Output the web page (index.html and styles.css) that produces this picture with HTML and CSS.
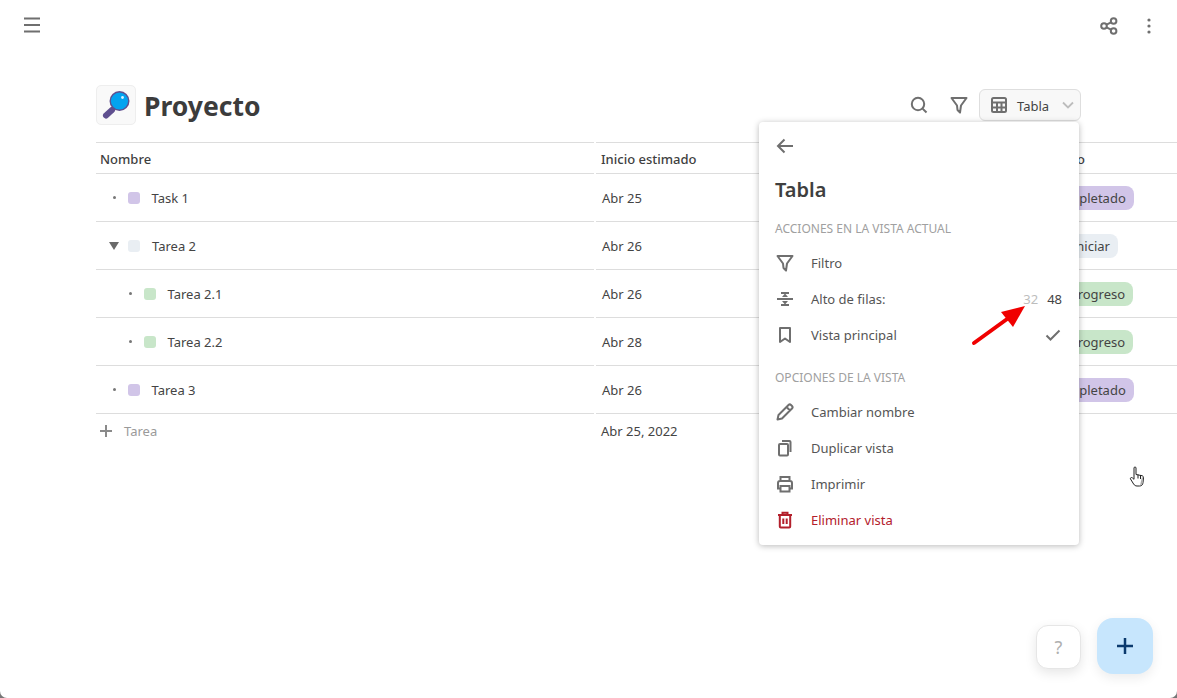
FILE: index.html
```html
<!DOCTYPE html>
<html lang="es">
<head>
<meta charset="utf-8">
<title>Proyecto</title>
<link rel="stylesheet" href="styles.css">
</head>
<body>
<div class="page">
  <header class="topbar">
    <svg class="ico hamburger" viewBox="0 0 16 16" width="16" height="16"><path d="M0 1.500h16M0 8h16M0 14.500h16"/></svg>
    <div class="topbar-right">
      <svg class="ico" viewBox="0 0 18 18" width="18" height="18"><circle cx="4" cy="9" r="2.800"/><circle cx="13.600" cy="4" r="2.800"/><circle cx="13.600" cy="14" r="2.800"/><path d="M6.500 7.700l4.600-2.400M6.500 10.300l4.600 2.400"/></svg>
      <svg class="dots" viewBox="0 0 4 16" width="4" height="16"><circle cx="2" cy="2" r="1.600"/><circle cx="2" cy="8" r="1.600"/><circle cx="2" cy="14" r="1.600"/></svg>
    </div>
  </header>
  <main class="content">
    <div class="titlebar">
      <div class="emoji">
        <svg viewBox="0 0 30 30" width="30" height="30"><path d="M5 25.500l6-5.500" stroke="#5f4f8f" stroke-width="6" stroke-linecap="round" fill="none"/><circle cx="18.500" cy="11" r="10" fill="#5f4f8f"/><circle cx="18.500" cy="11" r="8.600" fill="#03a3f0"/><circle cx="21.500" cy="7.500" r="1.400" fill="#d8f1ff"/></svg>
      </div>
      <h1 class="title">Proyecto</h1>
      <div class="tools">
        <svg class="ico" viewBox="0 0 18 18" width="18" height="18"><circle cx="8" cy="8" r="6.200"/><path d="M12.600 12.600L16.500 16.500"/></svg>
        <svg class="ico tool-filter" viewBox="0 0 18 18" width="18" height="18"><path d="M1.500 2h15L11 9.500l-1 7-2.500-2.500-.5-4.500z" stroke-linejoin="round"/></svg>
        <div class="viewbtn">
          <svg class="ico" viewBox="0 0 16 16" width="16" height="16"><rect x="1" y="1" width="14" height="14" rx="1.500"/><path d="M1 5.500h14M1 10.500h14M6 5.500V15M10.500 5.500V15"/></svg>
          <span class="viewbtn-label">Tabla</span>
          <svg class="chev" viewBox="0 0 12 8" width="12" height="8"><path d="M1 1.500l5 5 5-5"/></svg>
        </div>
      </div>
    </div>
    <div class="table">
      <div class="row head">
        <div class="cell name">Nombre</div><div class="cell">Inicio estimado</div><div class="cell">Estado</div>
      </div>
      <div class="row">
        <div class="cell name l0"><i class="bullet"></i><i class="sw purple"></i><span>Task 1</span></div>
        <div class="cell date">Abr 25</div>
        <div class="cell"><span class="pill purple">Completado</span></div>
      </div>
      <div class="row">
        <div class="cell name l0"><i class="tri"></i><i class="sw grey"></i><span>Tarea 2</span></div>
        <div class="cell date">Abr 26</div>
        <div class="cell"><span class="pill grey">Sin iniciar</span></div>
      </div>
      <div class="row">
        <div class="cell name l1"><i class="bullet"></i><i class="sw green"></i><span>Tarea 2.1</span></div>
        <div class="cell date">Abr 26</div>
        <div class="cell"><span class="pill green">En progreso</span></div>
      </div>
      <div class="row">
        <div class="cell name l1"><i class="bullet"></i><i class="sw green"></i><span>Tarea 2.2</span></div>
        <div class="cell date">Abr 28</div>
        <div class="cell"><span class="pill green">En progreso</span></div>
      </div>
      <div class="row">
        <div class="cell name l0"><i class="bullet"></i><i class="sw purple"></i><span>Tarea 3</span></div>
        <div class="cell date">Abr 26</div>
        <div class="cell"><span class="pill purple">Completado</span></div>
      </div>
      <div class="row add">
        <div class="cell name"><svg class="plus" viewBox="0 0 12 12" width="12" height="12"><path d="M6 0v12M0 6h12"/></svg><span class="add-label">Tarea</span></div>
        <div class="cell">Abr 25, 2022</div>
        <div class="cell"></div>
      </div>
    </div>
  </main>

  <aside class="menu">
    <svg class="ico back" viewBox="0 0 18 16" width="18" height="16"><path d="M17 8H2M8.500 1.500L2 8l6.500 6.500"/></svg>
    <h2 class="menu-title">Tabla</h2>
    <div class="menu-section">ACCIONES EN LA VISTA ACTUAL</div>
    <div class="menu-item">
      <svg class="ico" viewBox="0 0 18 18" width="18" height="18"><path d="M1.500 2h15L11 9.500l-1 7-2.500-2.500-.5-4.500z" stroke-linejoin="round"/></svg>
      <span>Filtro</span>
    </div>
    <div class="menu-item">
      <svg class="ico" viewBox="0 0 18 18" width="18" height="18"><path d="M1 9h16M5 3h8M5 15h8"/><path class="solid" d="M9 3.500l3 3.500H6zM9 14.500l3-3.500H6z"/></svg>
      <span>Alto de filas:</span>
      <span class="heights"><span class="h-off">32</span><span class="h-on">48</span></span>
    </div>
    <div class="menu-item">
      <svg class="ico" viewBox="0 0 18 18" width="18" height="18"><path d="M4 2h10v14l-5-3.500L4 16z" stroke-linejoin="round"/></svg>
      <span>Vista principal</span>
      <svg class="ico check" viewBox="0 0 16 12" width="16" height="12"><path d="M1.500 6.500l4 4 9-9"/></svg>
    </div>
    <div class="menu-section second">OPCIONES DE LA VISTA</div>
    <div class="menu-item">
      <svg class="ico" viewBox="0 0 18 18" width="18" height="18"><path d="M1.500 16.500l1-4.500L12.500 2a1.800 1.800 0 0 1 2.500 0l1 1a1.800 1.800 0 0 1 0 2.500L6 15.500zM10.500 4l3.500 3.500" stroke-linejoin="round"/></svg>
      <span>Cambiar nombre</span>
    </div>
    <div class="menu-item">
      <svg class="ico" viewBox="0 0 18 18" width="18" height="18"><rect x="3" y="5" width="9" height="11.500" rx="1"/><path d="M6 2h7.500a1 1 0 0 1 1 1v10"/></svg>
      <span>Duplicar vista</span>
    </div>
    <div class="menu-item">
      <svg class="ico" viewBox="0 0 18 18" width="18" height="18"><path d="M4.500 6V2h9v4M4.500 13.500H2V8a2 2 0 0 1 2-2h10a2 2 0 0 1 2 2v5.500h-2.500"/><rect x="4.500" y="11" width="9" height="5.500"/></svg>
      <span>Imprimir</span>
    </div>
    <div class="menu-item danger">
      <svg class="ico" viewBox="0 0 18 18" width="18" height="18"><path d="M2 4h14M6.500 4V1.800h5V4M3.800 4v11.500a1 1 0 0 0 1 1h8.400a1 1 0 0 0 1-1V4M7.300 7.500v5.500M10.700 7.500v5.500"/></svg>
      <span>Eliminar vista</span>
    </div>
  </aside>

  <svg class="arrow" viewBox="0 0 70 50" width="70" height="50"><path d="M4 45L44 16" stroke="#f00000" stroke-width="4" stroke-linecap="round" fill="none"/><path d="M55 8L31 14l12 15z" fill="#f00000"/></svg>

  <svg class="cursor" viewBox="0 0 16 22" width="16" height="22"><path d="M5 2a1 1 0 0 1 2 0v6.500l6 1.200c1 .2 1.500 1 1.500 2l-.5 5c-.2 2-1.500 3.300-3.500 3.300H8c-1.500 0-2.500-.7-3.400-2L1.500 13c-.5-1 .7-2 1.800-1.200L5 13.300z" fill="#fff" stroke="#222" stroke-width="1"/><path d="M9 8.500v4M11.500 9v4" stroke="#222" stroke-width="1"/><path d="M13 11l1 .5-.5 6-2.500 2z" fill="#aaa"/></svg>

  <div class="help">?</div>
  <div class="fab"><svg viewBox="0 0 18 18" width="18" height="18"><path d="M9 1v16M1 9h16"/></svg></div>
</div>
</body>
</html>
```
FILE: styles.css
```css
* { box-sizing: border-box; }
html, body { margin: 0; padding: 0; height: 100%; }
body { background: #777; color: #37352f; font-family: "Noto Sans", "Open Sans", sans-serif; font-size: 13px; }
.page { position: relative; width: 1177px; height: 698px; overflow: hidden; background: #fff; border-radius: 0 0 7px 7px; }
.ico { fill: none; stroke: #6f6f6f; stroke-width: 2; flex: none; }
.ico .solid { fill: #6f6f6f; stroke: none; }

.topbar { height: 50px; display: flex; align-items: center; justify-content: space-between; padding: 0 26px 0 24px; }
.hamburger { stroke-width: 1.800; }
.topbar-right { display: flex; align-items: center; gap: 29px; padding-top: 2px; }
.dots { fill: #6f6f6f; }

.content { padding: 35px 0 0 96px; }
.titlebar { display: flex; align-items: center; height: 40px; padding-right: 96px; }
.emoji { width: 40px; height: 40px; border: 1px solid #eeeeee; border-radius: 5px; background: #f9f9f9; display: flex; align-items: center; justify-content: center; }
.title { margin: 1px 0 0 8px; font-size: 26.500px; font-weight: 700; color: #3c3c3c; line-height: 40px; }
.tools { margin-left: auto; display: flex; align-items: center; }
.tool-filter { margin-left: 22px; margin-right: 11px; }
.viewbtn { width: 102px; height: 32px; border: 1px solid #dedede; border-radius: 6px; background: #f8f8f8; display: flex; align-items: center; padding: 0 6px 0 11px; }
.viewbtn-label { margin: 1px 0 0 10px; font-size: 13px; color: #444; }
.chev { margin-left: auto; fill: none; stroke: #bdbdbd; stroke-width: 1.800; }

.table { position: relative; margin-top: 17px; border-top: 1px solid #dddddd; }
.table::after { content: ""; position: absolute; left: 498px; top: -1px; bottom: 0; width: 2px; background: #fff; }
.row { display: grid; grid-template-columns: 500px 442px 1fr; align-items: center; height: 48px; border-bottom: 1px solid #dddddd; color: #444; }
.row.head { height: 31px; padding-top: 2px; font-weight: 500; color: #3f3f3f; }
.row.add { height: 34px; border-bottom: 0; }
.cell { display: flex; align-items: center; padding-left: 5px; white-space: nowrap; }
.cell.name { padding-left: 4px; }
.cell.date { padding-left: 6px; }
.cell.l0 { padding-left: 13px; }
.cell.l1 { padding-left: 29px; }
.bullet { width: 3px; height: 3px; border-radius: 50%; background: #777; margin: 0 11.500px 0 4px; flex: none; }
.tri { width: 0; height: 0; border-left: 5px solid transparent; border-right: 5px solid transparent; border-top: 8px solid #6a6a6a; margin-right: 9px; flex: none; }
.sw { width: 12px; height: 12px; border-radius: 3px; margin-right: 12px; flex: none; }
.purple { background: #d1c5e8; }
.grey { background: #e9eef3; }
.green { background: #c8e6c9; }
.pill { height: 24px; line-height: 24px; padding: 0 8px; border-radius: 8px; }
.plus { fill: none; stroke: #8a8a8a; stroke-width: 2; flex: none; }
.add-label { margin-left: 12px; color: #9a9a9a; }

.menu { position: absolute; left: 759px; top: 122px; width: 320px; height: 423px; background: #fff; border-radius: 4px; box-shadow: 0 1px 6px rgba(0,0,0,.28); padding: 16px 16px 0; }
.back { display: block; margin-left: 1px; }
.menu-title { margin: 22px 0 0; font-size: 20px; font-weight: 600; line-height: 27px; color: #3f3f3f; }
.menu-section { margin-top: 17px; height: 18px; line-height: 18px; font-size: 12px; color: #a0a0a0; }
.menu-section.second { margin-top: 16px; }
.menu-item { height: 36px; display: flex; align-items: center; color: #555; padding-left: 1px; }
.menu-section + .menu-item { margin-top: 7px; }
.menu-item > span:first-of-type { margin-left: 17px; }
.menu-item.danger { color: #b3202c; }
.danger .ico { stroke: #b3202c; }
.heights { margin-left: auto; margin-right: 1px; display: flex; gap: 9px; }
.h-off { color: #bdbdbd; }
.h-on { color: #444; }
.check { margin-left: auto; margin-right: 2px; }

.arrow { position: absolute; left: 970px; top: 298px; }
.cursor { position: absolute; left: 1129px; top: 466px; }
.help { position: absolute; left: 1036px; top: 625px; width: 45px; height: 44px; border: 1px solid #e6e6e6; border-radius: 12px; background: #fff; box-shadow: 0 4px 12px rgba(0,0,0,.1); color: #b0b0b0; font-size: 18px; display: flex; align-items: center; justify-content: center; }
.fab { position: absolute; left: 1097px; top: 618px; width: 56px; height: 56px; border-radius: 16px; background: #c7e6fd; box-shadow: 0 4px 12px rgba(0,0,0,.08); display: flex; align-items: center; justify-content: center; }
.fab svg { fill: none; stroke: #0b3a6e; stroke-width: 2.500; }
```
